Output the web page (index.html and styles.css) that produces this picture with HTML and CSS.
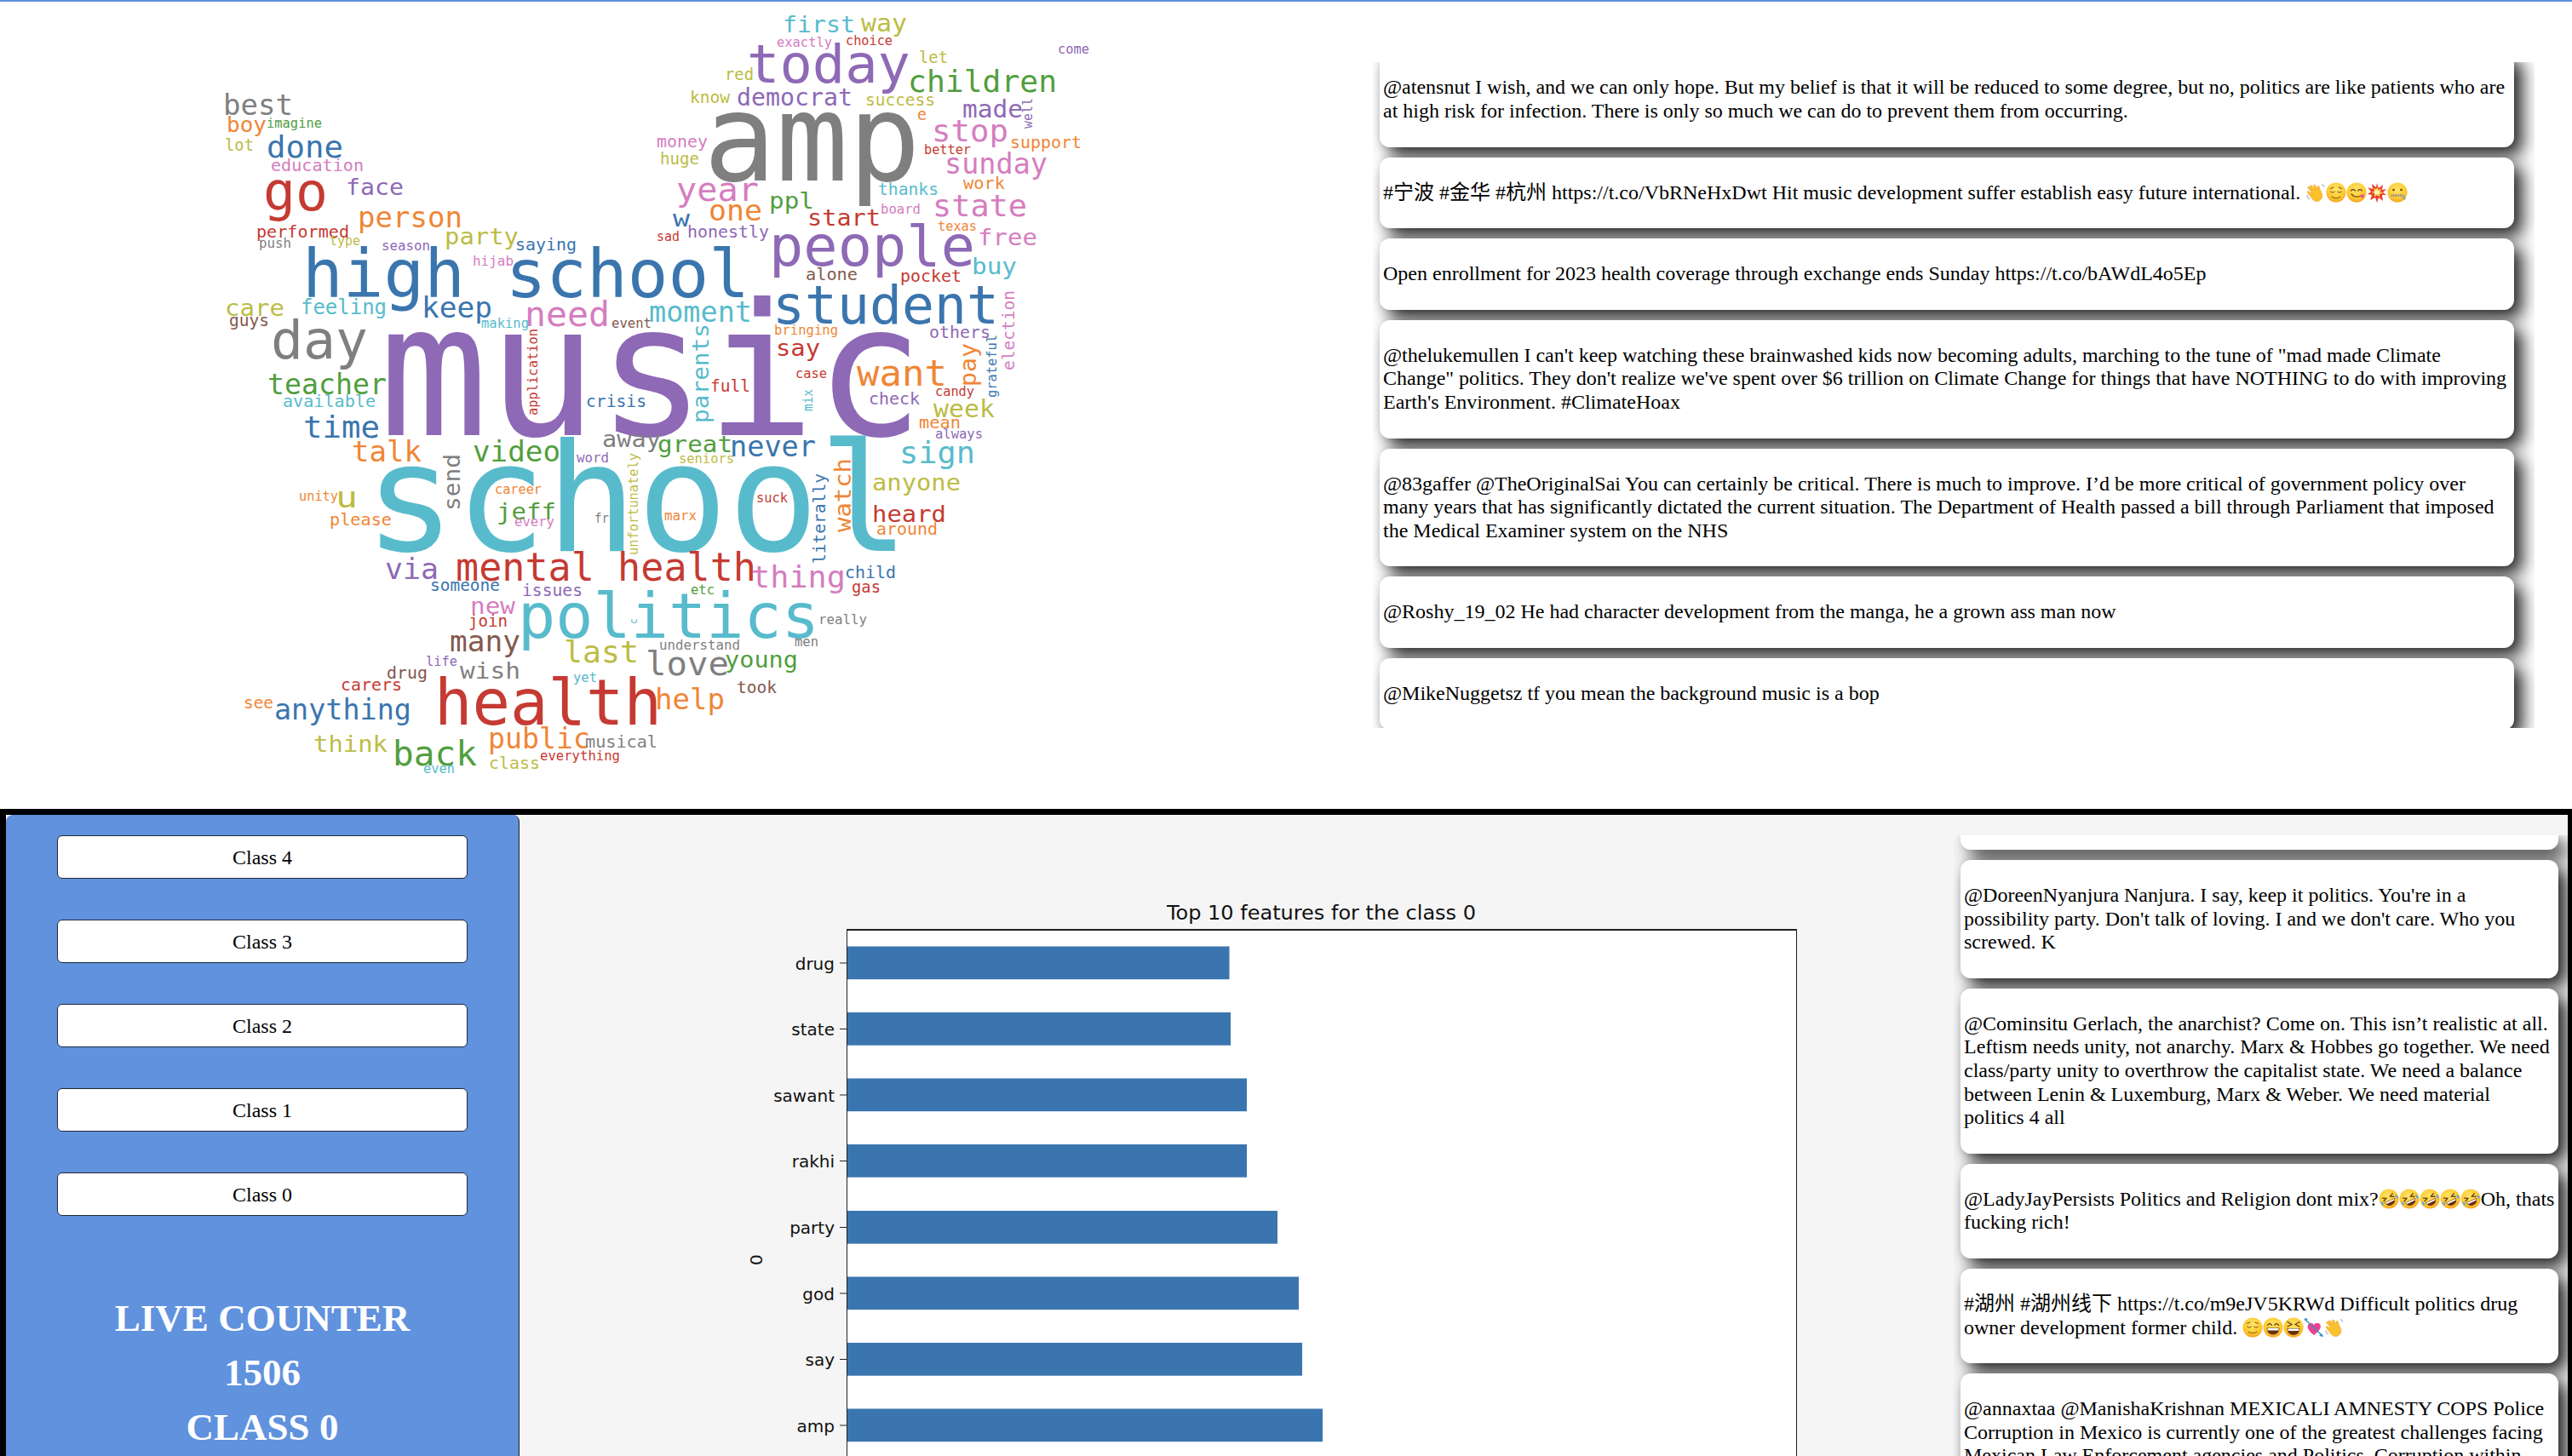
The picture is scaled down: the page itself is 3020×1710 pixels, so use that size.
FILE: index.html
```html
<!DOCTYPE html>
<html lang="en">
<head>
<meta charset="utf-8">
<title>Live tweet classes</title>
<link rel="stylesheet" href="styles.css">
</head>
<body>
<svg class="defs" width="0" height="0" aria-hidden="true">
  <defs>
    <radialGradient id="fg" cx="50%" cy="35%" r="70%"><stop offset="0" stop-color="#ffe56b"/><stop offset="0.65" stop-color="#fdc92f"/><stop offset="1" stop-color="#f29a1b"/></radialGradient>
    <symbol id="e-wave" viewBox="0 0 24 24"><path d="M6 10 3 7c-1-1 .5-2.500 1.500-1.500L8 9 5.500 5.500C4.500 4 6.500 3 7.500 4.300L11 8.500 9.500 4.500C9 3 11 2.300 11.700 3.700L14 8.500 14 5.500C14 4 16 4 16.200 5.500 16.500 8 18.500 11 19.500 13.500 21 18 18 22 14 22.500 10.500 23 8.500 20.500 6.500 17.500L2.500 12.500C1.500 11 3.300 10 4.300 11L7.500 14Z" fill="#fbc02d" stroke="#e99a17" stroke-width=".5"/><path d="M2 15c0 2 1 4 3 5M19 2.500c1.500.5 2.500 1.500 3 3" fill="none" stroke="#a9b4c0" stroke-width="1.200"/></symbol>
    <symbol id="e-relieved" viewBox="0 0 24 24"><circle cx="12" cy="12" r="11.500" fill="url(#fg)"/><path d="M5.500 11c1.500 1.500 3.500 1.500 5 0M13.500 11c1.500 1.500 3.500 1.500 5 0M7 17c3 2.500 7 2.500 10 0M5.500 7.500 9 6M18.500 7.500 15 6" fill="none" stroke="#7a4a12" stroke-width="1" stroke-linecap="round"/></symbol>
    <symbol id="e-yum" viewBox="0 0 24 24"><circle cx="12" cy="12" r="11.500" fill="url(#fg)"/><path d="M5.500 10c1.500-2 3.500-2 5 0M13.500 10c1.500-2 3.500-2 5 0M6 14c3 4 8 4 12 1.500" fill="none" stroke="#7a4a12" stroke-width="1.300" stroke-linecap="round"/><path d="M16 15.500l4-1.500c1.500 1.500 1 4-1 4.500-1.500 0-2.500-1.500-3-3Z" fill="#ef4f7d"/></symbol>
    <symbol id="e-boom" viewBox="0 0 24 24"><path d="M12 1l2 6 5-4-1 6 5-1-4 4 4 3-5 0 1 7-5-4-2 6-2-6-6 3 2-6-5-1 4-3-4-5 6 2-1-6 5 4Z" fill="#e8432e"/><path d="M12 6l2 3 3-1-1 3 3 2-4 1 0 3-3-2-3 2 0-4-3-1 3-2-1-3 3 1Z" fill="#fcd34d"/><circle cx="12" cy="12" r="2.500" fill="#fff8d0"/></symbol>
    <symbol id="e-zip" viewBox="0 0 24 24"><circle cx="12" cy="12" r="11.500" fill="url(#fg)"/><circle cx="7.500" cy="9" r="1.300" fill="#6b3f12"/><circle cx="16.500" cy="9" r="1.300" fill="#6b3f12"/><path d="M5 15.500h14" stroke="#8a8f96" stroke-width="3" stroke-dasharray="1.200 .8"/><path d="M19 15l3 4-2 2-2.500-4.500Z" fill="#9aa1a9"/></symbol>
    <symbol id="e-rofl" viewBox="0 0 24 24"><g transform="rotate(-25 12 12)"><circle cx="12" cy="12" r="11.500" fill="url(#fg)"/><path d="M5.500 8l4 2-4 2M18.500 8l-4 2 4 2" fill="none" stroke="#6b3f12" stroke-width="1.300" stroke-linecap="round"/><path d="M5.500 14h13c-.5 4-3 6-6.500 6s-6-2-6.500-6Z" fill="#6b3012"/><path d="M6.500 14.500h11v1.700h-11Z" fill="#fff"/><path d="M3 11c-2 2-2 4 0 5 1.500-1 1.500-3 0-5ZM21 11c2 2 2 4 0 5-1.500-1-1.500-3 0-5Z" fill="#58a9ef"/></g></symbol>
    <symbol id="e-grin" viewBox="0 0 24 24"><circle cx="12" cy="12" r="11.500" fill="url(#fg)"/><path d="M5.500 9.500c1.500-2.500 3.500-2.500 5 0M13.500 9.500c1.500-2.500 3.500-2.500 5 0" fill="none" stroke="#6b3f12" stroke-width="1.300" stroke-linecap="round"/><path d="M4.500 12.500h15c0 5-3.500 8-7.500 8s-7.500-3-7.500-8Z" fill="#6b3012"/><path d="M5.500 13h13v2.500h-13Z" fill="#fff"/></symbol>
    <symbol id="e-squint" viewBox="0 0 24 24"><circle cx="12" cy="12" r="11.500" fill="url(#fg)"/><path d="M5 5.500l5 3-5 2.500M19 5.500l-5 3 5 2.500" fill="none" stroke="#6b3f12" stroke-width="1.300" stroke-linecap="round"/><path d="M4.500 13h15c0 5-3.500 8-7.500 8s-7.500-3-7.500-8Z" fill="#6b3012"/><path d="M5.500 13.500h13v2.500h-13Z" fill="#fff"/></symbol>
    <symbol id="e-cupid" viewBox="0 0 24 24"><path d="M12 21C7 17 3.500 13 5 9c1.300-3 5-3 7 0 2-3 6-3 7.500 0 1.500 4-2.500 8-7.500 12Z" fill="#ef3f8f"/><path d="M1 2l21 20" stroke="#3d8fc4" stroke-width="1.500"/><path d="M1 1l4 1-3 3ZM23 23l-5-1 3-3Z" fill="#3d8fc4"/></symbol>
  </defs>
</svg>

<section class="top">
  <svg class="cloud" width="1612" height="948" viewBox="0 2 1612 948" role="img" aria-label="Word cloud">
    <g class="words">
      <text class="teal" x="919" y="38" font-size="27" textLength="85" lengthAdjust="spacingAndGlyphs">first</text>
      <text class="olive" x="1011" y="37" font-size="28" textLength="54" lengthAdjust="spacingAndGlyphs">way</text>
      <text class="pink" x="912" y="55" font-size="15.500" textLength="65" lengthAdjust="spacingAndGlyphs">exactly</text>
      <text class="red" x="993" y="53" font-size="15.500" textLength="55" lengthAdjust="spacingAndGlyphs">choice</text>
      <text class="purple" x="1242" y="63" font-size="15.500" textLength="37" lengthAdjust="spacingAndGlyphs">come</text>
      <text class="purple" x="877" y="97" font-size="62" textLength="192" lengthAdjust="spacingAndGlyphs">today</text>
      <text class="olive" x="1079" y="74" font-size="19" textLength="34" lengthAdjust="spacingAndGlyphs">let</text>
      <text class="olive" x="851" y="94" font-size="19" textLength="34" lengthAdjust="spacingAndGlyphs">red</text>
      <text class="green" x="1066" y="108" font-size="36" textLength="175" lengthAdjust="spacingAndGlyphs">children</text>
      <text class="olive" x="810" y="121" font-size="19.500" textLength="47" lengthAdjust="spacingAndGlyphs">know</text>
      <text class="purple" x="865" y="124" font-size="27.500" textLength="136" lengthAdjust="spacingAndGlyphs">democrat</text>
      <text class="olive" x="1016" y="124" font-size="19.500" textLength="82" lengthAdjust="spacingAndGlyphs">success</text>
      <text class="gray" x="262" y="135" font-size="33" textLength="82" lengthAdjust="spacingAndGlyphs">best</text>
      <text class="orange" x="1077" y="141" font-size="19" textLength="11" lengthAdjust="spacingAndGlyphs">e</text>
      <text class="purple" x="1130" y="138" font-size="28" textLength="71" lengthAdjust="spacingAndGlyphs">made</text>
      <text class="purple" transform="translate(1212,151) rotate(-90)" font-size="15" textLength="36" lengthAdjust="spacingAndGlyphs">well</text>
      <text class="orange" x="266" y="155" font-size="25" textLength="47" lengthAdjust="spacingAndGlyphs">boy</text>
      <text class="green" x="313" y="150" font-size="15.500" textLength="65" lengthAdjust="spacingAndGlyphs">imagine</text>
      <text class="gray" x="826" y="212" font-size="143" textLength="255" lengthAdjust="spacingAndGlyphs">amp</text>
      <text class="pink" x="1094" y="166" font-size="36" textLength="90" lengthAdjust="spacingAndGlyphs">stop</text>
      <text class="olive" x="264" y="177" font-size="19" textLength="34" lengthAdjust="spacingAndGlyphs">lot</text>
      <text class="pink" x="771" y="173" font-size="20" textLength="60" lengthAdjust="spacingAndGlyphs">money</text>
      <text class="red" x="1085" y="181" font-size="15.500" textLength="55" lengthAdjust="spacingAndGlyphs">better</text>
      <text class="orange" x="1186" y="174" font-size="20" textLength="84" lengthAdjust="spacingAndGlyphs">support</text>
      <text class="blue" x="313" y="185" font-size="36" textLength="90" lengthAdjust="spacingAndGlyphs">done</text>
      <text class="olive" x="775" y="193" font-size="19.500" textLength="46" lengthAdjust="spacingAndGlyphs">huge</text>
      <text class="pink" x="1109" y="204" font-size="33" textLength="121" lengthAdjust="spacingAndGlyphs">sunday</text>
      <text class="pink" x="318" y="201" font-size="20" textLength="109" lengthAdjust="spacingAndGlyphs">education</text>
      <text class="orange" x="1131" y="222" font-size="20" textLength="49" lengthAdjust="spacingAndGlyphs">work</text>
      <text class="red" x="309" y="247" font-size="63" textLength="76" lengthAdjust="spacingAndGlyphs">go</text>
      <text class="purple" x="406" y="229" font-size="27" textLength="68" lengthAdjust="spacingAndGlyphs">face</text>
      <text class="pink" x="794" y="236" font-size="39" textLength="97" lengthAdjust="spacingAndGlyphs">year</text>
      <text class="teal" x="1031" y="229" font-size="20" textLength="71" lengthAdjust="spacingAndGlyphs">thanks</text>
      <text class="green" x="903" y="245" font-size="27" textLength="53" lengthAdjust="spacingAndGlyphs">ppl</text>
      <text class="pink" x="1095" y="254" font-size="36" textLength="111" lengthAdjust="spacingAndGlyphs">state</text>
      <text class="pink" x="1034" y="251" font-size="16" textLength="47" lengthAdjust="spacingAndGlyphs">board</text>
      <text class="orange" x="832" y="259" font-size="33" textLength="63" lengthAdjust="spacingAndGlyphs">one</text>
      <text class="orange" x="420" y="267" font-size="33" textLength="123" lengthAdjust="spacingAndGlyphs">person</text>
      <text class="red" x="948" y="265" font-size="27" textLength="86" lengthAdjust="spacingAndGlyphs">start</text>
      <text class="blue" x="790" y="266" font-size="27" textLength="20" lengthAdjust="spacingAndGlyphs">w</text>
      <text class="orange" x="1101" y="271" font-size="15.500" textLength="46" lengthAdjust="spacingAndGlyphs">texas</text>
      <text class="red" x="771" y="283" font-size="15" textLength="27" lengthAdjust="spacingAndGlyphs">sad</text>
      <text class="purple" x="807" y="279" font-size="20" textLength="96" lengthAdjust="spacingAndGlyphs">honestly</text>
      <text class="purple" x="903" y="312" font-size="66" textLength="242" lengthAdjust="spacingAndGlyphs">people</text>
      <text class="pink" x="1148" y="288" font-size="27" textLength="70" lengthAdjust="spacingAndGlyphs">free</text>
      <text class="red" x="301" y="279" font-size="20" textLength="109" lengthAdjust="spacingAndGlyphs">performed</text>
      <text class="gray" x="304" y="291" font-size="16" textLength="38" lengthAdjust="spacingAndGlyphs">push</text>
      <text class="olive" x="387" y="288" font-size="15" textLength="36" lengthAdjust="spacingAndGlyphs">type</text>
      <text class="purple" x="448" y="294" font-size="15.500" textLength="57" lengthAdjust="spacingAndGlyphs">season</text>
      <text class="olive" x="522" y="287" font-size="27" textLength="87" lengthAdjust="spacingAndGlyphs">party</text>
      <text class="blue" x="605" y="294" font-size="20" textLength="72" lengthAdjust="spacingAndGlyphs">saying</text>
      <text class="blue" x="355" y="349" font-size="79" textLength="525" lengthAdjust="spacingAndGlyphs">high school</text>
      <text class="pink" x="555" y="312" font-size="16" textLength="48" lengthAdjust="spacingAndGlyphs">hijab</text>
      <text class="teal" x="1141" y="322" font-size="27" textLength="53" lengthAdjust="spacingAndGlyphs">buy</text>
      <text class="brown" x="946" y="329" font-size="20" textLength="61" lengthAdjust="spacingAndGlyphs">alone</text>
      <text class="red" x="1057" y="331" font-size="20" textLength="72" lengthAdjust="spacingAndGlyphs">pocket</text>
      <text class="blue" x="907" y="380" font-size="62" textLength="266" lengthAdjust="spacingAndGlyphs">student</text>
      <text class="pink" transform="translate(1191,435) rotate(-90)" font-size="20" textLength="94" lengthAdjust="spacingAndGlyphs">election</text>
      <text class="olive" x="264" y="371" font-size="27" textLength="70" lengthAdjust="spacingAndGlyphs">care</text>
      <text class="teal" x="353" y="369" font-size="24" textLength="101" lengthAdjust="spacingAndGlyphs">feeling</text>
      <text class="blue" x="495" y="373" font-size="33" textLength="83" lengthAdjust="spacingAndGlyphs">keep</text>
      <text class="pink" x="616" y="383" font-size="40" textLength="100" lengthAdjust="spacingAndGlyphs">need</text>
      <text class="teal" x="762" y="378" font-size="33" textLength="121" lengthAdjust="spacingAndGlyphs">moment</text>
      <text class="brown" x="269" y="383" font-size="20" textLength="47" lengthAdjust="spacingAndGlyphs">guys</text>
      <text class="gray" x="318" y="421" font-size="62" textLength="114" lengthAdjust="spacingAndGlyphs">day</text>
      <text class="teal" x="565" y="385" font-size="15.500" textLength="56" lengthAdjust="spacingAndGlyphs">making</text>
      <text class="brown" x="718" y="385" font-size="15.500" textLength="47" lengthAdjust="spacingAndGlyphs">event</text>
      <text class="orange" x="909" y="393" font-size="16" textLength="75" lengthAdjust="spacingAndGlyphs">bringing</text>
      <text class="purple" x="1091" y="397" font-size="20" textLength="72" lengthAdjust="spacingAndGlyphs">others</text>
      <text class="blue" transform="translate(1170,467) rotate(-90)" font-size="15.500" textLength="74" lengthAdjust="spacingAndGlyphs">grateful</text>
      <text class="purple" x="445" y="511" font-size="216" textLength="640" lengthAdjust="spacingAndGlyphs">music</text>
      <text class="teal" transform="translate(832,497) rotate(-90)" font-size="27" textLength="117" lengthAdjust="spacingAndGlyphs">parents</text>
      <text class="red" x="911" y="418" font-size="27" textLength="52" lengthAdjust="spacingAndGlyphs">say</text>
      <text class="orange" transform="translate(1146,454) rotate(-90)" font-size="27" textLength="51" lengthAdjust="spacingAndGlyphs">pay</text>
      <text class="orange" x="1006" y="453" font-size="43" textLength="106" lengthAdjust="spacingAndGlyphs">want</text>
      <text class="red" transform="translate(631,488) rotate(-90)" font-size="15.500" textLength="102" lengthAdjust="spacingAndGlyphs">application</text>
      <text class="red" x="934" y="444" font-size="15.500" textLength="37" lengthAdjust="spacingAndGlyphs">case</text>
      <text class="red" x="834" y="460" font-size="20" textLength="47" lengthAdjust="spacingAndGlyphs">full</text>
      <text class="green" x="314" y="463" font-size="33" textLength="140" lengthAdjust="spacingAndGlyphs">teacher</text>
      <text class="teal" transform="translate(954,483) rotate(-90)" font-size="15" textLength="26" lengthAdjust="spacingAndGlyphs">mix</text>
      <text class="purple" x="1020" y="475" font-size="20" textLength="60" lengthAdjust="spacingAndGlyphs">check</text>
      <text class="red" x="1098" y="465" font-size="15.500" textLength="46" lengthAdjust="spacingAndGlyphs">candy</text>
      <text class="blue" x="688" y="478" font-size="20" textLength="71" lengthAdjust="spacingAndGlyphs">crisis</text>
      <text class="teal" x="332" y="478" font-size="20" textLength="109" lengthAdjust="spacingAndGlyphs">available</text>
      <text class="olive" x="1096" y="490" font-size="28" textLength="72" lengthAdjust="spacingAndGlyphs">week</text>
      <text class="orange" x="1079" y="503" font-size="20" textLength="49" lengthAdjust="spacingAndGlyphs">mean</text>
      <text class="purple" x="1098" y="515" font-size="15.500" textLength="56" lengthAdjust="spacingAndGlyphs">always</text>
      <text class="blue" x="356" y="514" font-size="36" textLength="90" lengthAdjust="spacingAndGlyphs">time</text>
      <text class="orange" x="413" y="542" font-size="33" textLength="82" lengthAdjust="spacingAndGlyphs">talk</text>
      <text class="gray" x="707" y="525" font-size="27" textLength="69" lengthAdjust="spacingAndGlyphs">away</text>
      <text class="green" x="772" y="531" font-size="27" textLength="88" lengthAdjust="spacingAndGlyphs">great</text>
      <text class="blue" x="857" y="536" font-size="33" textLength="101" lengthAdjust="spacingAndGlyphs">never</text>
      <text class="green" x="555" y="542" font-size="33" textLength="103" lengthAdjust="spacingAndGlyphs">video</text>
      <text class="purple" x="677" y="543" font-size="15.500" textLength="38" lengthAdjust="spacingAndGlyphs">word</text>
      <text class="olive" x="797" y="544" font-size="15.500" textLength="65" lengthAdjust="spacingAndGlyphs">seniors</text>
      <text class="teal" x="1056" y="544" font-size="36" textLength="89" lengthAdjust="spacingAndGlyphs">sign</text>
      <text class="teal" x="428" y="647" font-size="177" textLength="640" lengthAdjust="spacingAndGlyphs">school</text>
      <text class="gray" transform="translate(540,600) rotate(-90)" font-size="27" textLength="67" lengthAdjust="spacingAndGlyphs">send</text>
      <text class="olive" transform="translate(749,652) rotate(-90)" font-size="15.500" textLength="120" lengthAdjust="spacingAndGlyphs">unfortunately</text>
      <text class="orange" transform="translate(999,625) rotate(-90)" font-size="27" textLength="87" lengthAdjust="spacingAndGlyphs">watch</text>
      <text class="blue" transform="translate(969,662) rotate(-90)" font-size="20" textLength="106" lengthAdjust="spacingAndGlyphs">literally</text>
      <text class="olive" x="1024" y="576" font-size="27" textLength="104" lengthAdjust="spacingAndGlyphs">anyone</text>
      <text class="orange" x="581" y="580" font-size="15.500" textLength="55" lengthAdjust="spacingAndGlyphs">career</text>
      <text class="orange" x="351" y="588" font-size="15.500" textLength="46" lengthAdjust="spacingAndGlyphs">unity</text>
      <text class="olive" x="394" y="596" font-size="33" textLength="26" lengthAdjust="spacingAndGlyphs">u</text>
      <text class="red" x="888" y="590" font-size="15.500" textLength="37" lengthAdjust="spacingAndGlyphs">suck</text>
      <text class="green" x="583" y="610" font-size="27" textLength="70" lengthAdjust="spacingAndGlyphs">jeff</text>
      <text class="orange" x="387" y="617" font-size="20" textLength="73" lengthAdjust="spacingAndGlyphs">please</text>
      <text class="red" x="1024" y="613" font-size="27" textLength="87" lengthAdjust="spacingAndGlyphs">heard</text>
      <text class="orange" x="780" y="611" font-size="15.500" textLength="38" lengthAdjust="spacingAndGlyphs">marx</text>
      <text class="gray" x="698" y="614" font-size="15" textLength="17" lengthAdjust="spacingAndGlyphs">fr</text>
      <text class="pink" x="604" y="618" font-size="15.500" textLength="47" lengthAdjust="spacingAndGlyphs">every</text>
      <text class="orange" x="1029" y="628" font-size="20" textLength="72" lengthAdjust="spacingAndGlyphs">around</text>
      <text class="purple" x="452" y="680" font-size="33" textLength="63" lengthAdjust="spacingAndGlyphs">via</text>
      <text class="red" x="535" y="682" font-size="46" textLength="353" lengthAdjust="spacingAndGlyphs">mental health</text>
      <text class="pink" x="882" y="690" font-size="36" textLength="111" lengthAdjust="spacingAndGlyphs">thing</text>
      <text class="blue" x="992" y="679" font-size="20" textLength="60" lengthAdjust="spacingAndGlyphs">child</text>
      <text class="blue" x="505" y="694" font-size="20" textLength="82" lengthAdjust="spacingAndGlyphs">someone</text>
      <text class="red" x="1000" y="696" font-size="20" textLength="34" lengthAdjust="spacingAndGlyphs">gas</text>
      <text class="purple" x="613" y="700" font-size="20" textLength="71" lengthAdjust="spacingAndGlyphs">issues</text>
      <text class="green" x="811" y="698" font-size="15.500" textLength="28" lengthAdjust="spacingAndGlyphs">etc</text>
      <text class="pink" x="552" y="721" font-size="27" textLength="53" lengthAdjust="spacingAndGlyphs">new</text>
      <text class="teal" x="608" y="749" font-size="73" textLength="354" lengthAdjust="spacingAndGlyphs">politics</text>
      <text class="teal" transform="translate(748,733) rotate(-90)" font-size="12" textLength="7" lengthAdjust="spacingAndGlyphs">c</text>
      <text class="red" x="550" y="736" font-size="20" textLength="46" lengthAdjust="spacingAndGlyphs">join</text>
      <text class="gray" x="961" y="733" font-size="15.500" textLength="57" lengthAdjust="spacingAndGlyphs">really</text>
      <text class="brown" x="528" y="765" font-size="33" textLength="83" lengthAdjust="spacingAndGlyphs">many</text>
      <text class="olive" x="662" y="778" font-size="36" textLength="88" lengthAdjust="spacingAndGlyphs">last</text>
      <text class="gray" x="774" y="763" font-size="15.500" textLength="95" lengthAdjust="spacingAndGlyphs">understand</text>
      <text class="gray" x="933" y="759" font-size="15" textLength="28" lengthAdjust="spacingAndGlyphs">men</text>
      <text class="gray" x="758" y="793" font-size="39" textLength="98" lengthAdjust="spacingAndGlyphs">love</text>
      <text class="green" x="851" y="784" font-size="27" textLength="86" lengthAdjust="spacingAndGlyphs">young</text>
      <text class="purple" x="500" y="782" font-size="15.500" textLength="37" lengthAdjust="spacingAndGlyphs">life</text>
      <text class="gray" x="540" y="797" font-size="27" textLength="71" lengthAdjust="spacingAndGlyphs">wish</text>
      <text class="brown" x="454" y="797" font-size="20" textLength="48" lengthAdjust="spacingAndGlyphs">drug</text>
      <text class="teal" x="673" y="801" font-size="15.500" textLength="28" lengthAdjust="spacingAndGlyphs">yet</text>
      <text class="red" x="400" y="811" font-size="20" textLength="72" lengthAdjust="spacingAndGlyphs">carers</text>
      <text class="brown" x="865" y="814" font-size="20" textLength="47" lengthAdjust="spacingAndGlyphs">took</text>
      <text class="orange" x="286" y="832" font-size="19.500" textLength="35" lengthAdjust="spacingAndGlyphs">see</text>
      <text class="red" x="510" y="851" font-size="74" textLength="267" lengthAdjust="spacingAndGlyphs">health</text>
      <text class="orange" x="769" y="833" font-size="33" textLength="82" lengthAdjust="spacingAndGlyphs">help</text>
      <text class="blue" x="322" y="845" font-size="33" textLength="161" lengthAdjust="spacingAndGlyphs">anything</text>
      <text class="olive" x="368" y="883" font-size="27" textLength="87" lengthAdjust="spacingAndGlyphs">think</text>
      <text class="orange" x="573" y="879" font-size="33" textLength="120" lengthAdjust="spacingAndGlyphs">public</text>
      <text class="green" x="461" y="899" font-size="40" textLength="99" lengthAdjust="spacingAndGlyphs">back</text>
      <text class="gray" x="687" y="878" font-size="20" textLength="85" lengthAdjust="spacingAndGlyphs">musical</text>
      <text class="olive" x="574" y="903" font-size="20" textLength="60" lengthAdjust="spacingAndGlyphs">class</text>
      <text class="red" x="634" y="893" font-size="15.500" textLength="94" lengthAdjust="spacingAndGlyphs">everything</text>
      <text class="teal" x="497" y="908" font-size="15.500" textLength="37" lengthAdjust="spacingAndGlyphs">even</text>
    </g>
  </svg>

  <div class="feed feed-top">
    <div class="tweet tweet-first">@atensnut I wish, and we can only hope. But my belief is that it will be reduced to some degree, but no, politics are like patients who are at high risk for infection. There is only so much we can do to prevent them from occurring.</div>
    <div class="tweet">#宁波 #金华 #杭州 https://t.co/VbRNeHxDwt Hit music development suffer establish easy future international. <svg class="emoji"><use href="#e-wave"/></svg><svg class="emoji"><use href="#e-relieved"/></svg><svg class="emoji"><use href="#e-yum"/></svg><svg class="emoji"><use href="#e-boom"/></svg><svg class="emoji"><use href="#e-zip"/></svg></div>
    <div class="tweet">Open enrollment for 2023 health coverage through exchange ends Sunday https://t.co/bAWdL4o5Ep</div>
    <div class="tweet">@thelukemullen I can't keep watching these brainwashed kids now becoming adults, marching to the tune of "mad made Climate Change" politics. They don't realize we've spent over $6 trillion on Climate Change for things that have NOTHING to do with improving Earth's Environment. #ClimateHoax</div>
    <div class="tweet">@83gaffer @TheOriginalSai You can certainly be critical. There is much to improve. I’d be more critical of government policy over many years that has significantly dictated the current situation. The Department of Health passed a bill through Parliament that imposed the Medical Examiner system on the NHS</div>
    <div class="tweet">@Roshy_19_02 He had character development from the manga, he a grown ass man now</div>
    <div class="tweet">@MikeNuggetsz tf you mean the background music is a bop</div>
  </div>
</section>

<section class="bottom">
  <aside class="sidebar">
    <button class="class-btn">Class 4</button>
    <button class="class-btn">Class 3</button>
    <button class="class-btn">Class 2</button>
    <button class="class-btn">Class 1</button>
    <button class="class-btn">Class 0</button>
    <div class="counter">
      <div>LIVE COUNTER</div>
      <div>1506</div>
      <div>CLASS 0</div>
    </div>
  </aside>
  <main class="main">
    <svg class="chart" width="1684" height="753" viewBox="610 957 1684 753" role="img" aria-label="Top 10 features for the class 0">
      <rect class="plot" x="994" y="1092" width="1116" height="640"/>
      <g class="bars">
        <rect x="994" y="1111.500" width="449.500" height="38.700"/>
        <rect x="994" y="1189" width="451" height="38.700"/>
        <rect x="994" y="1266.500" width="470" height="38.700"/>
        <rect x="994" y="1344" width="470" height="38.700"/>
        <rect x="994" y="1422" width="506" height="38.700"/>
        <rect x="994" y="1499.500" width="531" height="38.700"/>
        <rect x="994" y="1577" width="535" height="38.700"/>
        <rect x="994" y="1654.500" width="559" height="38.700"/>
      </g>
      <path class="spine" d="M994.500 1710V1092M2109.500 1092V1710"/>
      <path class="spine spine-top" d="M994 1092H2110"/>
      <path class="spine" d="M986 1131h8M986 1208.500h8M986 1286h8M986 1363.500h8M986 1441.500h8M986 1519h8M986 1596.500h8M986 1674h8"/>
      <g class="labels">
        <text x="1370" y="1080" font-size="23" textLength="363" lengthAdjust="spacingAndGlyphs">Top 10 features for the class 0</text>
        <text class="tick" x="980" y="1139" font-size="20">drug</text>
        <text class="tick" x="980" y="1216" font-size="20">state</text>
        <text class="tick" x="980" y="1294" font-size="20">sawant</text>
        <text class="tick" x="980" y="1371" font-size="20">rakhi</text>
        <text class="tick" x="980" y="1449" font-size="20">party</text>
        <text class="tick" x="980" y="1527" font-size="20">god</text>
        <text class="tick" x="980" y="1604" font-size="20">say</text>
        <text class="tick" x="980" y="1682" font-size="20">amp</text>
        <text transform="translate(895,1486) rotate(-90)" font-size="20">0</text>
      </g>
    </svg>
    <div class="feed-wrap">
      <div class="feed feed-bottom">
        <div class="tweet tweet-stub"></div>
        <div class="tweet">@DoreenNyanjura Nanjura. I say, keep it politics. You're in a possibility party. Don't talk of loving. I and we don't care. Who you screwed. K</div>
        <div class="tweet">@Cominsitu Gerlach, the anarchist? Come on. This isn’t realistic at all. Leftism needs unity, not anarchy. Marx &amp; Hobbes go together. We need class/party unity to overthrow the capitalist state. We need a balance between Lenin &amp; Luxemburg, Marx &amp; Weber. We need material politics 4 all</div>
        <div class="tweet">@LadyJayPersists Politics and Religion dont mix?<svg class="emoji"><use href="#e-rofl"/></svg><svg class="emoji"><use href="#e-rofl"/></svg><svg class="emoji"><use href="#e-rofl"/></svg><svg class="emoji"><use href="#e-rofl"/></svg><svg class="emoji"><use href="#e-rofl"/></svg>Oh, thats fucking rich!</div>
        <div class="tweet">#湖州 #湖州线下 https://t.co/m9eJV5KRWd Difficult politics drug owner development former child. <svg class="emoji"><use href="#e-relieved"/></svg><svg class="emoji"><use href="#e-grin"/></svg><svg class="emoji"><use href="#e-squint"/></svg><svg class="emoji"><use href="#e-cupid"/></svg><svg class="emoji"><use href="#e-wave"/></svg></div>
        <div class="tweet">@annaxtaa @ManishaKrishnan MEXICALI AMNESTY COPS Police Corruption in Mexico is currently one of the greatest challenges facing Mexican Law Enforcement agencies and Politics. Corruption within</div>
      </div>
    </div>
  </main>
</section>
</body>
</html>
```

FILE: styles.css
```css
* { box-sizing: border-box; }

html, body {
  margin: 0;
  width: 3020px;
  height: 1710px;
  overflow: hidden;
  background: #fff;
  font-family: "Liberation Serif", "Noto Sans CJK SC", serif;
  font-size: 24px;
  color: #000;
}

.defs { display: block; height: 0; }

.top {
  display: flex;
  height: 950px;
  border-top: 2px solid #6092de;
}

.cloud { display: block; flex: none; }

.words text {
  font-family: "DejaVu Sans Mono", monospace;
}

.purple { fill: #8e69b6; }
.blue   { fill: #3a75ae; }
.orange { fill: #ef8636; }
.green  { fill: #519e3e; }
.red    { fill: #c53a32; }
.teal   { fill: #58bbcc; }
.pink   { fill: #d57dbf; }
.gray   { fill: #7f7f7f; }
.olive  { fill: #bcbc45; }
.brown  { fill: #84584e; }

.feed {
  flex: none;
  overflow: hidden;
  display: flex;
  flex-direction: column;
  gap: 12px;
  padding-left: 8px;
}

.feed-top {
  width: 1364px;
  height: 782px;
  margin-top: 71px;
}

.feed-wrap {
  flex: none;
  width: 721px;
  padding-top: 24px;
  background: #f5f5f5;
}

.feed-bottom {
  width: 721px;
  height: 729px;
  background: #f5f5f5;
}

.tweet {
  flex: none;
  background: #fff;
  border-radius: 12px;
  padding: 28px 4px;
  line-height: 27.600px;
  box-shadow: 10px 10px 20px rgba(0, 0, 0, 0.85), 0 0 8px rgba(0, 0, 0, 0.12);
}

.feed-top .tweet { width: 1332px; }
.feed-bottom .tweet { width: 702px; }

.tweet-first { margin-top: -11.600px; }

.tweet-stub {
  height: 17px;
  padding: 0;
  border-radius: 0 0 12px 12px;
}

.emoji {
  width: 24px;
  height: 24px;
  vertical-align: -4px;
}

.bottom {
  display: flex;
  height: 760px;
  border-style: solid;
  border-color: #000;
  border-width: 7px 5px 0 7px;
}

.sidebar {
  flex: none;
  width: 603px;
  padding: 24px 0 0 60px;
  background: #6092de;
  border-right: 1px solid #222;
  border-radius: 8px 8px 0 0;
}

.class-btn {
  display: block;
  width: 482px;
  height: 51px;
  margin: 0 0 48px;
  padding: 2px 0 0;
  background: #fff;
  border: 1px solid #1f2a3a;
  border-radius: 6px;
  font: inherit;
  color: #000;
  text-align: center;
}

.counter {
  width: 482px;
  margin-top: 88px;
  color: #fff;
  font-weight: bold;
  font-size: 45px;
  line-height: 64px;
  text-align: center;
}

.main {
  flex: 1;
  display: flex;
  min-width: 0;
  background: #f5f5f5;
}

.chart { display: block; flex: none; }

.plot { fill: #fff; }
.bars rect { fill: #3b75af; }

.spine {
  fill: none;
  stroke: #222;
  stroke-width: 1;
}

.spine-top { stroke-width: 2; }

.labels text {
  font-family: "DejaVu Sans", sans-serif;
  fill: #111;
}

.labels .tick { text-anchor: end; }
```
